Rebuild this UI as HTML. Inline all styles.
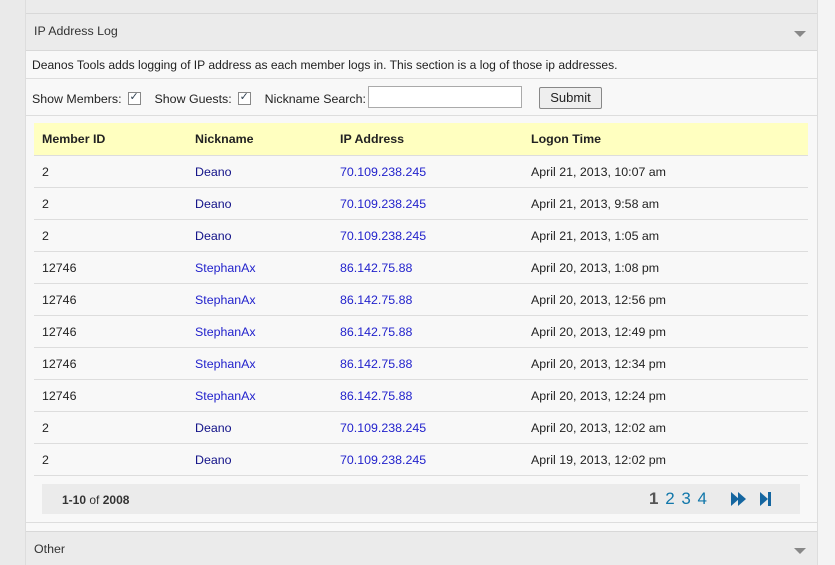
<!DOCTYPE html>
<html><head><style>
html,body{margin:0;width:835px;height:565px;overflow:hidden}
body{background:#f4f4f4;font-family:"Liberation Sans",Arial,sans-serif;font-size:12px;color:#222;position:relative}
.left{position:absolute;left:0;top:0;width:25px;height:565px;background:#eaeaea;border-right:1px solid #ddd}
.panel{position:absolute;left:25px;top:0;width:791px;height:565px;overflow:hidden;background:#f8f8f8;border-left:1px solid #ddd;border-right:1px solid #ddd}
.hdr{position:absolute;left:0;width:791px;background:#ebebeb;border-top:1px solid #d8d8d8;border-bottom:1px solid #d8d8d8}
.hdr span{position:absolute;left:8px;font-size:12px;color:#333}
.tri{position:absolute;right:11px;width:0;height:0;border-left:6px solid transparent;border-right:6px solid transparent;border-top:6px solid #888}
.line{position:absolute;left:0;width:791px;border-top:1px solid #ddd}
.cb{display:inline-block;width:11px;height:11px;border:1px solid #888;background:#fff;vertical-align:-2px;position:relative;margin:0 14px 0 6px}
.cb:after{content:"✓";position:absolute;left:1px;top:-3px;font-size:11px;color:#345}
table{position:absolute;left:8px;top:123px;width:774px;border-collapse:collapse}
th{background:#ffffc0;text-align:left;height:32px;font-size:12.4px;padding:0 0 0 8px;border-bottom:1px solid #ddd}
td{height:31px;border-bottom:1px solid #ddd;padding:0 0 0 8px;font-size:12.4px}
a{color:#22c;text-decoration:none}
.nick a{color:#118}
</style></head><body>
<div class="left"></div>
<div class="panel">
 <div class="hdr" style="top:-1px;height:14px"></div>
 <div class="hdr" style="top:13px;height:36px"><span style="top:10px;font-size:12.4px">IP Address Log</span><div class="tri" style="top:17px"></div></div>
 <div style="position:absolute;left:6px;top:58px;font-size:12.1px">Deanos Tools adds logging of IP address as each member logs in. This section is a log of those ip addresses.</div>
 <div class="line" style="top:78px"></div>
 <div style="position:absolute;left:6px;top:92px;font-size:12.4px">Show Members:<span class="cb"></span>Show Guests:<span class="cb"></span>Nickname Search:</div>
 <div style="position:absolute;left:342px;top:86px;width:152px;height:20px;background:#fff;border:1px solid #aaa"></div>
 <div style="position:absolute;left:513px;top:87px;width:61px;height:20px;background:#eee;border:1px solid #888;border-radius:2px;text-align:center;line-height:20px;font-size:13px">Submit</div>
 <div class="line" style="top:115px"></div>
 <table>
 <tr><th style="width:145px">Member ID</th><th style="width:137px">Nickname</th><th style="width:183px">IP Address</th><th>Logon Time</th></tr>
 <tr><td>2</td><td class="nick"><a>Deano</a></td><td><a>70.109.238.245</a></td><td>April 21, 2013, 10:07 am</td></tr>
 <tr><td>2</td><td class="nick"><a>Deano</a></td><td><a>70.109.238.245</a></td><td>April 21, 2013, 9:58 am</td></tr>
 <tr><td>2</td><td class="nick"><a>Deano</a></td><td><a>70.109.238.245</a></td><td>April 21, 2013, 1:05 am</td></tr>
 <tr><td>12746</td><td><a>StephanAx</a></td><td><a>86.142.75.88</a></td><td>April 20, 2013, 1:08 pm</td></tr>
 <tr><td>12746</td><td><a>StephanAx</a></td><td><a>86.142.75.88</a></td><td>April 20, 2013, 12:56 pm</td></tr>
 <tr><td>12746</td><td><a>StephanAx</a></td><td><a>86.142.75.88</a></td><td>April 20, 2013, 12:49 pm</td></tr>
 <tr><td>12746</td><td><a>StephanAx</a></td><td><a>86.142.75.88</a></td><td>April 20, 2013, 12:34 pm</td></tr>
 <tr><td>12746</td><td><a>StephanAx</a></td><td><a>86.142.75.88</a></td><td>April 20, 2013, 12:24 pm</td></tr>
 <tr><td>2</td><td class="nick"><a>Deano</a></td><td><a>70.109.238.245</a></td><td>April 20, 2013, 12:02 am</td></tr>
 <tr><td>2</td><td class="nick"><a>Deano</a></td><td><a>70.109.238.245</a></td><td>April 19, 2013, 12:02 pm</td></tr>
 </table>
 <div style="position:absolute;left:16px;top:484px;width:758px;height:30px;background:#ebebeb">
  <div style="position:absolute;left:20px;top:9px;font-size:12px;color:#333"><b>1-10</b> of <b>2008</b></div>
  <div style="position:absolute;left:607px;top:5px;font-size:17px;color:#17a;word-spacing:2px">
   <span style="color:#555;font-weight:bold">1</span> 2 3 4</div>
  <svg style="position:absolute;left:689px;top:8px" width="16" height="14"><path d="M0 0L8 7L0 14Z M7 0L15 7L7 14Z" fill="#1566a0"/></svg>
  <svg style="position:absolute;left:718px;top:8px" width="12" height="14"><path d="M0 0L8 7L0 14Z" fill="#1566a0"/><rect x="8" y="0" width="3" height="14" fill="#1566a0"/></svg>
 </div>
 <div class="line" style="top:522px"></div>
 <div class="hdr" style="top:531px;height:40px"><span style="top:10px;font-size:12.4px">Other</span><div class="tri" style="top:16px"></div></div>
</div>
</body></html>
